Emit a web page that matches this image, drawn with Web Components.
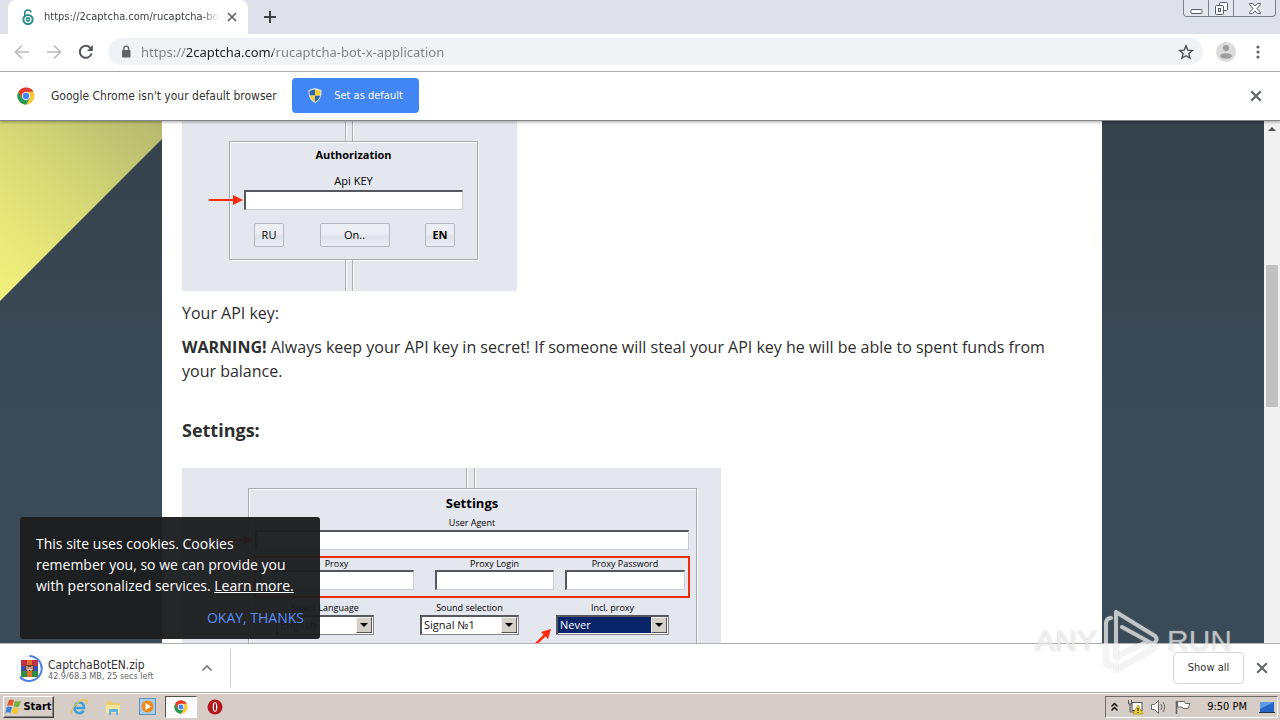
<!DOCTYPE html>
<html lang="en">
<head>
<meta charset="utf-8">
<meta name="viewport" content="width=device-width, initial-scale=1">
<title>2captcha – rucaptcha bot x application</title>
<style>
  html, body { margin: 0; height: 100%; }
  body { font: 12px/16px "DejaVu Sans Condensed", Tahoma, sans-serif; color: #333; overflow: hidden; }
</style>
</head>
<body>
<desktop-shell></desktop-shell>

<script>
const BASE = `<style>
  *, *::before { box-sizing: border-box; }
  button, input, select { font: inherit; color: inherit; margin: 0; border-radius: 0; }
  button { display: flex; align-items: center; justify-content: center; padding: 0; border: 0; background: none; }
  svg { display: block; flex: none; }
</style>`;

function define(name, html) {
  const template = document.createElement('template');
  template.innerHTML = BASE + html;
  customElements.define(name, class extends HTMLElement {
    constructor() {
      super();
      this.attachShadow({ mode: 'open' }).append(template.content.cloneNode(true));
    }
  });
}

const CHROME_LOGO = (size) => `<svg width="${size}" height="${size}" viewBox="0 0 48 48" aria-hidden="true">
  <circle cx="24" cy="24" r="23" fill="#fbc93b"/>
  <path d="M4.1 12.5A23 23 0 0 0 24 47L34 30 24 24 14 29z" fill="#229a55"/>
  <path d="M4.1 12.5A23 23 0 0 1 43.9 12.5H24L14 29z" fill="#e33b2e"/>
  <circle cx="24" cy="24" r="11" fill="#fff"/><circle cx="24" cy="24" r="8.5" fill="#4285f4"/></svg>`;

const CROSS = (size) => `<svg width="${size}" height="${size}" viewBox="0 0 10 10" aria-hidden="true"><path d="M1 1l8 8M9 1l-8 8" stroke="#5f6368" stroke-width="1.7" fill="none"/></svg>`;

/* ---------- Browser chrome ---------- */
define('browser-tab', `<style>
  :host { display: flex; align-items: center; align-self: stretch; width: 240px; padding: 0 11px 0 12px; gap: 8px;
    background: #fff; border-radius: 8px 8px 0 0; position: relative; color: #3c4043; font-size: 11px; }
  .title { flex: 1; min-width: 0; overflow: hidden; white-space: nowrap;
    -webkit-mask-image: linear-gradient(to right, #000 90%, transparent); mask-image: linear-gradient(to right, #000 90%, transparent); }
</style>
<svg width="16" height="16" viewBox="0 0 16 16" aria-hidden="true"><g fill="none" stroke="#2c8c8c">
  <circle cx="8" cy="10.5" r="4.6" stroke-width="2"/><circle cx="8" cy="10.5" r="1.6" stroke-width="1.6"/>
  <path d="M4.8 7V3.6C4.8.2 10.6.1 11 3.4" stroke-width="1.6"/></g></svg>
<span class="title"><slot></slot></span>
<button aria-label="Close tab">${CROSS(10)}</button>`);

define('tab-strip', `<style>
  :host { display: flex; height: 34px; padding-left: 8px; background: #dee1e9; align-items: center; }
  .new { width: 20px; height: 20px; margin-left: 12px; }
  .frame { margin: 0 4px 0 auto; align-self: flex-start; display: flex; height: 17px; border: 1px solid #7c828c; border-top: 0;
    border-radius: 0 0 4px 4px; background: #e3e6ec; }
  .frame button { width: 25px; border-right: 1px solid #7c828c; }
  .frame button:last-child { width: 41px; border: 0; }
</style>
<browser-tab>https://2captcha.com/rucaptcha-bot-x</browser-tab>
<button class="new" aria-label="New tab"><svg width="12" height="12" viewBox="0 0 12 12"><path d="M6 0v12M0 6h12" stroke="#3c4043" stroke-width="2"/></svg></button>
<div class="frame">
  <button aria-label="Minimize"><svg width="13" height="14" viewBox="0 0 13 14"><rect x="1" y="8.500" width="11" height="4" rx="1" fill="#fff" stroke="#555b66"/></svg></button>
  <button aria-label="Restore"><svg width="13" height="13" viewBox="0 0 13 13" fill="#fff" stroke="#555b66"><rect x="4.500" y=".5" width="8" height="8" rx="1"/><rect x=".5" y="3.500" width="8" height="9" rx="1"/><rect x="3.500" y="6.500" width="2" height="3"/></svg></button>
  <button aria-label="Close"><svg width="12" height="11" viewBox="0 0 12 11"><path d="M.5.500h3L6 3 8.500.500h3v1L8 5.500l3.500 4v1h-3L6 8l-2.500 2.500h-3v-1L4 5.500.5 1.500z" fill="#fff" stroke="#555b66"/></svg></button>
</div>`);

define('tool-bar', `<style>
  :host { display: flex; align-items: center; height: 38px; padding: 0 14px 2px; background: #fff; border-bottom: 1px solid #b4b4b4; box-sizing: border-box; }
  .nav { display: flex; gap: 16px; }
  .nav button { width: 16px; height: 16px; }
  .omni { flex: 1; display: flex; align-items: center; height: 27px; margin: 0 13px 0 14px; padding: 0 9px 0 13px; border-radius: 14px; background: #f0f3f6; }
  input { flex: 1; min-width: 0; border: 0; padding: 0; margin-left: 10px; outline: 0; font: 13px/20px "Noto Sans", sans-serif; height: 20px;
    background: linear-gradient(to right, #7b8086 45px, #202124 45px 132px, #7b8086 132px);
    -webkit-background-clip: text; background-clip: text; -webkit-text-fill-color: transparent; }
  .menu { width: 16px; height: 16px; margin-left: 14px; }
</style>
<div class="nav">
  <button aria-label="Back"><svg width="16" height="16" viewBox="0 0 16 16"><path d="M15 8H2M8 1.500 1.500 8 8 14.500" fill="none" stroke="#b9bbbe" stroke-width="1.700"/></svg></button>
  <button aria-label="Forward"><svg width="16" height="16" viewBox="0 0 16 16"><path d="M1 8h13M8 1.500 14.500 8 8 14.500" fill="none" stroke="#b9bbbe" stroke-width="1.700"/></svg></button>
  <button aria-label="Reload"><svg width="16" height="16" viewBox="0 0 16 16"><path d="M13.600 9.500A6 6 0 1 1 12.500 4" fill="none" stroke="#53565a" stroke-width="2"/><path d="M14.800 1v6H9z" fill="#53565a"/></svg></button>
</div>
<div class="omni">
  <svg width="10" height="13" viewBox="0 0 10 13" aria-hidden="true"><rect x="1" y="5" width="8.500" height="7.500" rx="1" fill="#5f6368"/><path d="M2.800 5.500V3.500a2.400 2.400 0 0 1 4.800 0v2" fill="none" stroke="#5f6368" stroke-width="1.400"/></svg>
  <input aria-label="Address and search bar" value="https://2captcha.com/rucaptcha-bot-x-application" spellcheck="false">
  <button aria-label="Bookmark this page"><svg width="16" height="16" viewBox="0 0 16 16"><path d="M8 1.800l1.800 4.300 4.600.4-3.500 3 1.100 4.600L8 11.700 4 14.100l1.100-4.600-3.500-3 4.600-.4z" fill="none" stroke="#4c5054" stroke-width="1.400"/></svg></button>
</div>
<button class="avatar" aria-label="Profile"><svg width="20" height="20" viewBox="0 0 20 20"><circle cx="10" cy="10" r="10" fill="#dcdcdc"/><circle cx="10" cy="6" r="3" fill="#9d9d9d"/><ellipse cx="10" cy="14" rx="6" ry="2.800" fill="#9d9d9d"/></svg></button>
<button class="menu" aria-label="Menu"><svg width="4" height="14" viewBox="0 0 4 14" fill="#5f6368"><circle cx="2" cy="2" r="1.600"/><circle cx="2" cy="7" r="1.600"/><circle cx="2" cy="12" r="1.600"/></svg></button>`);

define('default-prompt', `<style>
  :host { display: flex; align-items: center; height: 49px; padding: 0 18px 1px 17px; background: #fff; border-bottom: 1px solid #85868a;
    box-sizing: border-box; position: relative; z-index: 1; box-shadow: 0 1px 3px rgba(0,0,0,.35); color: #333; }
  p { margin: 0 auto 0 16px; }
  .lead { display: flex; align-items: center; width: 275px; }
  .set { height: 35px; width: 127px; gap: 12px; border-radius: 4px; background: #4285f4; color: #fff; font-size: 11px; }
  .close { margin-left: auto; }
</style>
<div class="lead">${CHROME_LOGO(18)}<p>Google Chrome isn't your default browser</p></div>
<button class="set"><svg width="14" height="15" viewBox="0 0 14 15" aria-hidden="true"><path d="M7 0l6.500 2c.3 7-2 10.500-6.500 13C2.500 12.500.2 9 .5 2z" fill="#dfe6ee"/><path d="M7 1.500v6H1.600V2.800zM7 7.500h5.200C11.500 10.500 9.700 12.500 7 13.800z" fill="#2b62b5"/><path d="M7 1.500v6h5.300V2.800zM7 7.500H1.700C2.400 10.500 4.300 12.500 7 13.800z" fill="#f6cf35"/></svg><span>Set as default</span></button>
<button class="close" aria-label="Dismiss">${CROSS(12)}</button>`);

/* ---------- Classic form parts inside the page's illustrations ---------- */
define('inset-field', `<style>
  :host { display: block; }
  label { display: flex; flex-direction: column; align-items: center; gap: var(--field-gap, 0px); }
  input { width: 100%; height: 20px; padding: 0 4px; background: #fff; outline: 0; border: 1px solid #c9ccd2; border-top: 2px solid #56585e; border-left: 2px solid #56585e; }
</style>
<label><slot></slot><input type="text"></label>`);

customElements.define('inset-select', class extends HTMLElement {
  constructor() {
    super();
    this.attachShadow({ mode: 'open' }).innerHTML = BASE + `<style>
      :host { display: block; }
      label { display: flex; flex-direction: column; align-items: center; gap: 1px; }
      .box { display: flex; width: 100%; height: 20px; padding: 1px; background: #fff; border: 1px solid #85878d;
        border-top-color: #56585e; border-left-color: #56585e; box-shadow: inset 1px 1px #56585e; }
      select { appearance: none; flex: 1; min-width: 0; border: 0; outline: 0; padding: 0 2px; font-size: 11px; line-height: 16px; background: transparent; color: #111; }
      :host([chosen]) select { background: #0a246a; color: #fff; }
      .drop { width: 16px; display: grid; place-items: center; background: #d4d0c8; border: 1px solid #f4f2ee; border-right-color: #55565a; border-bottom-color: #55565a; }
    </style>
    <label><span>${this.getAttribute('label')}</span><span class="box"><select><option>${this.getAttribute('value')}</option></select>
    <span class="drop"><svg width="8" height="4" viewBox="0 0 8 4"><path d="M0 0h8L4 4z" fill="#000"/></svg></span></span></label>`;
  }
});

define('auth-panel', `<style>
  :host { display: block; width: 335px; padding: 0 39px 0 47px; background: #e5e7ef; color: #000; font-size: 11px; line-height: 16px; box-sizing: border-box; }
  .stub { width: 8px; height: 20px; margin: 0 0 0 116px; border: 1px solid #a9acb4; border-width: 0 1px; box-shadow: inset 1px 0 #fff, 1px 0 #fff; }
  .stub.low { height: 31px; }
  .group { height: 119px; padding: 5px 14px 0; border: 1px solid #a5abb3; box-shadow: inset 1px 1px #fff, 1px 1px #fff; }
  h3 { margin: 0 0 10px; font: inherit; font-weight: bold; text-align: center; }
  .entry { position: relative; }
  .entry svg { position: absolute; right: 100%; bottom: 4px; margin-right: 1px; }
  .row { display: flex; justify-content: space-between; padding: 13px 8px 0 10px; }
  .row button { width: 30px; height: 24px; border: 1px solid #b4b8c0; border-radius: 2px; background: linear-gradient(#eceef4 40%, #dfe3e8 60%, #eceef4); }
  .row .on { width: 70px; }
</style>
<div class="stub"></div>
<div class="group">
  <h3>Authorization</h3>
  <div class="entry"><inset-field style="--field-gap:1px">Api KEY</inset-field>
  <svg width="34" height="12" viewBox="0 0 34 12" aria-hidden="true"><path d="M0 6h25" stroke="#fb2a0d" stroke-width="2"/><path d="M24 1l10 5-10 5z" fill="#fb2a0d"/></svg></div>
  <div class="row"><button>RU</button><button class="on">On..</button><button><b>EN</b></button></div>
</div>
<div class="stub low"></div>`);

define('settings-panel', `<style>
  :host { display: block; width: 539px; padding: 0 24px 0 66px; background: #e5e7ef; color: #000; font-size: 9px; line-height: 12px; box-sizing: border-box; }
  .stub { width: 9px; height: 20px; margin: 0 0 0 218px; border: 1px solid #a9acb4; border-width: 0 1px; box-shadow: inset 1px 0 #fff, 1px 0 #fff; }
  .group { height: 220px; padding: 6px 7px 0 6px; border: 1px solid #a5abb3; box-shadow: inset 1px 1px #fff, 1px 1px #fff; }
  h3 { margin: 0 0 6px; font-size: 13px; line-height: 16px; text-align: center; }
  .proxy { display: grid; grid-template-columns: 155px 1fr 120px; column-gap: 11px; margin: 6px -1px 0; padding: 0 3px 6px; border: 2px solid #e8300f; }
  .login { margin-left: 10px; }
  .picks { display: grid; grid-template-columns: 98px 108px 113px; column-gap: 37px; margin: 4px 0 0 21px; }
  .sound { margin-left: 9px; }
  .entry, .last { position: relative; }
  .entry svg { position: absolute; right: 100%; bottom: 4px; margin-right: 2px; }
  .last svg { position: absolute; right: 100%; top: 26px; margin-right: 4px; }
</style>
<div class="stub"></div>
<div class="group">
  <h3>Settings</h3>
  <div class="entry"><inset-field style="--field-gap:1px">User Agent</inset-field>
  <svg width="34" height="12" viewBox="0 0 34 12" aria-hidden="true"><path d="M0 6h25" stroke="#fb2a0d" stroke-width="2"/><path d="M24 1l10 5-10 5z" fill="#fb2a0d"/></svg></div>
  <div class="proxy"><inset-field>Proxy</inset-field><inset-field class="login">Proxy Login</inset-field><inset-field>Proxy Password</inset-field></div>
  <div class="picks">
    <inset-select label="Select Language" value="English"></inset-select>
    <inset-select class="sound" label="Sound selection" value="Signal №1"></inset-select>
    <div class="last"><inset-select chosen label="Incl. proxy" value="Never"></inset-select>
    <svg width="18" height="18" viewBox="0 0 18 18" aria-hidden="true"><path d="M1 17 12 6" stroke="#fb2a0d" stroke-width="2.500"/><path d="M17 1l-3 10-7-7z" fill="#fb2a0d"/></svg></div>
  </div>
</div>`);

/* ---------- Page ---------- */
define('cookie-notice', `<style>
  :host { display: block; width: 300px; padding: 16px 16px 11px; border-radius: 3px; background: rgba(28,29,30,.96); color: #fff;
    font: 14px/21px "Open Sans", sans-serif; box-sizing: border-box; }
  p { margin: 0 0 11px; }
  a { color: inherit; }
  button { margin-left: auto; color: #5a8df8; font: inherit; }
</style>
<p>This site uses cookies. Cookies remember you, so we can provide you with personalized services. <a href="#cookies">Learn more.</a></p>
<button>OKAY, THANKS</button>`);

define('page-view', `<style>
  :host { display: flex; flex: 1; min-height: 0; position: relative; overflow: hidden; background: linear-gradient(#36424c, #3a4b57 60%); }
  .corner { position: absolute; top: 0; left: 0; width: 180px; height: 180px; clip-path: polygon(0 0, 100% 0, 0 100%);
    background: linear-gradient(to top right, #f2f07c 0, #e6e679 25%, #d6d876 50%, #c2c672 75%, #b4b46c 100%); }
  .scroll { flex: 1; min-width: 0; overflow: hidden; }
  article { position: relative; max-width: 940px; min-height: 100%; margin: 0 auto; padding: 0 20px; box-sizing: border-box; background: #fff; color: #2e2e2e;
    font: 16px/24px "Open Sans", sans-serif; }
  p { margin: 10px 0; }
  h2 { margin: 35px 0 26px; font-size: 18px; line-height: 24px; font-weight: 700; }
  .bar { position: relative; width: 16px; background: #f1f1f1; padding: 6px 2px 0; }
  .bar i { display: block; height: 142px; margin-top: 134px; background: #c1c1c1; }
  .bar svg { margin: 0 auto; }
  cookie-notice { position: absolute; left: 20px; bottom: 4px; }
</style>
<div class="corner"></div>
<div class="scroll"><article>
  <auth-panel></auth-panel>
  <p>Your API key:</p>
  <p><b>WARNING!</b> Always keep your API key in secret! If someone will steal your API key he will be able to spent funds from your balance.</p>
  <h2>Settings:</h2>
  <settings-panel></settings-panel>
</article></div>
<div class="bar"><svg width="8" height="4" viewBox="0 0 8 4"><path d="M0 4h8L4 0z" fill="#505050"/></svg><i></i></div>
<cookie-notice></cookie-notice>`);

/* ---------- Downloads and taskbar ---------- */
define('download-shelf', `<style>
  :host { display: flex; align-items: center; height: 50px; padding: 0 12px 2px 16px; background: #fff; border-top: 1px solid #b0b0b0; color: #333; box-sizing: border-box; }
  .item { display: flex; align-items: center; align-self: stretch; width: 215px; margin: 5px 0 4px; border-right: 1px solid #d0d0d0; }
  .text { margin-left: 5px; padding-top: 4px; flex: 1; display: flex; flex-direction: column; }
  .name { font-size: 12px; line-height: 12px; }
  .state { font-size: 9px; line-height: 10px; color: #666; white-space: nowrap; }
  .item button { margin-right: 18px; }
  .all { width: 71px; height: 32px; margin-left: auto; border: 1px solid #d5d7da; border-radius: 4px; font-size: 11px; }
  .close { margin-left: 12px; }
</style>
<div class="item">
  <svg width="27" height="27" viewBox="0 0 27 27" aria-hidden="true"><circle cx="13.500" cy="13.500" r="12.500" fill="none" stroke="#d8e4fa" stroke-width="1"/><path d="M13.500 1A12.500 12.500 0 1 1 4 22" fill="none" stroke="#4a80ea" stroke-width="2"/>
    <rect x="5" y="5" width="17" height="6" fill="#c0304a"/><rect x="5" y="11" width="17" height="5" fill="#3552c0"/><rect x="5" y="16" width="17" height="6" fill="#2f8d44"/><rect x="11" y="5" width="5" height="17" fill="#e0702a"/><rect x="9" y="10" width="9" height="6" fill="#7a3a28"/><path d="M11 11v4h2v-3M16 11v4h-2v-3" fill="none" stroke="#eceae4"/></svg>
  <div class="text"><span class="name">CaptchaBotEN.zip</span><span class="state">42.9/68.3 MB, 25 secs left</span></div>
  <button aria-label="Download options"><svg width="10" height="6" viewBox="0 0 10 6"><path d="M.5 5.500 5 1l4.500 4.500" fill="none" stroke="#777" stroke-width="1.600"/></svg></button>
</div>
<button class="all">Show all</button>
<button class="close" aria-label="Close downloads">${CROSS(12)}</button>`);

define('task-bar', `<style>
  :host { display: flex; align-items: center; height: 27px; padding: 0 2px 0 3px; background: #d6cec6; box-shadow: inset 0 1px #fff, 0 -1px #b0aaa4; color: #000; box-sizing: border-box; }
  .start { width: 51px; height: 22px; gap: 1px; font-weight: bold; font-size: 11px; border: 1px solid #fff; border-right-color: #404040; border-bottom-color: #404040; box-shadow: inset -1px -1px #8b867f; }
  .quick { display: flex; align-items: center; gap: 2px; margin-left: 9px; }
  .quick button { width: 32px; height: 22px; }
  .quick .active { background: #fbfbfb; border: 1px solid #55524e; border-right-color: #fff; border-bottom-color: #fff; }
  .tray { display: flex; align-items: center; height: 22px; margin-left: auto; padding: 0 2px 0 4px; border: 1px solid #6f6b66; border-right-color: #fff; border-bottom-color: #fff; gap: 6px; }
  .tray .net { margin-left: 2px; }
  time { font-size: 11px; margin: 0 6px 0 10px; white-space: nowrap; }
</style>
<button class="start"><svg width="17" height="16" viewBox="0 0 17 16" aria-hidden="true"><path d="M4 1c2-1 3-.5 5 .300L7.400 7C5.500 6 4 6 2 7z" fill="#e2572c"/><path d="M10 1.700c2 1 3.500.8 6 0L14.200 7.500c-2 1-3.500.6-5.800-.2z" fill="#7cb242"/><path d="M1.800 8c2-1 3-.6 5.200.2L5.400 14C4 13 2.500 13 .3 14z" fill="#3f83d6"/><path d="M8 8.500c2 1 3.500.800 6 0L12.300 14.200c-2 1-3.600.7-5.900-.1z" fill="#f6c62f"/></svg>Start</button>
<div class="quick">
  <button aria-label="Internet Explorer"><svg width="18" height="18" viewBox="0 0 18 18"><path d="M4 10h10c.5-7-9-7.500-9.500 0 .2 6 7.500 6.500 9 2.500" fill="none" stroke="#3f9fdc" stroke-width="2.600"/><path d="M2 16C-1 12 9 1 16 2c2 .5 1 3 0 4" fill="none" stroke="#e8c63c" stroke-width="1.300"/></svg></button>
  <button aria-label="File Explorer"><svg width="18" height="18" viewBox="0 0 18 18"><path d="M2 3h6l1 2h7v10H2z" fill="#e9cf70"/><path d="M2 7h14v8H2z" fill="#f6e49b"/><path d="M5 17v-5q0-1 1-1h7q1 0 1 1v5h-2v-3H7v3z" fill="#5db4e0"/></svg></button>
  <button aria-label="Media Player"><svg width="17" height="17" viewBox="0 0 17 17"><rect x=".5" y=".5" width="16" height="16" fill="#a8cdea" stroke="#5b93bf"/><circle cx="8.500" cy="8.500" r="6" fill="#f08a1d"/><path d="M6.500 5l5.500 3.500L6.500 12z" fill="#fff"/></svg></button>
  <button class="active" aria-label="Google Chrome">${CHROME_LOGO(14)}</button>
  <button aria-label="Opera"><svg width="16" height="16" viewBox="0 0 16 16"><circle cx="8" cy="8" r="7.500" fill="#b3161b"/><ellipse cx="8" cy="8" rx="2.300" ry="4.800" fill="#fff"/><ellipse cx="8" cy="8" rx="1" ry="4" fill="#a01418"/></svg></button>
</div>
<div class="tray">
  <button aria-label="Show hidden icons"><svg width="9" height="10" viewBox="0 0 9 10"><path d="M1.500 4.500l3-3 3 3M1.500 8.500l3-3 3 3" fill="none" stroke="#000" stroke-width="1.400"/></svg></button>
  <button class="net" aria-label="Network"><svg width="17" height="16" viewBox="0 0 17 16"><rect x="5" y="3.500" width="10" height="8" fill="#f4f4f4" stroke="#555"/><path d="M1.500 1v4h3V1M3 5v8h5" fill="none" stroke="#555"/><path d="M11 6l5 9H6z" fill="#f6d51e" stroke="#a08608" stroke-width=".6"/><path d="M11 9v3M11 13v1" stroke="#222" stroke-width="1.300"/></svg></button>
  <button aria-label="Volume"><svg width="18" height="16" viewBox="0 0 18 16" fill="none" stroke="#666"><path d="M1.500 5.500h3l4-4v13l-4-4h-3z" fill="#fff"/><path d="M11 5q2 3 0 6M13 3q3.500 5 0 10"/></svg></button>
  <button aria-label="Action Center"><svg width="17" height="16" viewBox="0 0 17 16"><path d="M2.500 2v13" stroke="#666" stroke-width="1.600"/><path d="M3.500 2.500h7l1 2H16l-2 5H9l-1-1.500H3.500z" fill="#fff" stroke="#666"/></svg></button>
  <time>9:50 PM</time>
  <button aria-label="Show desktop"><svg width="16" height="14" viewBox="0 0 16 14"><path d="M1 2h14v10H1z" fill="#2364c4"/><path d="M1 2h14L1 9z" fill="#5d9ae6"/><path d="M0 12h16v1H0z" fill="#234"/></svg></button>
</div>`);

define('capture-mark', `<style>
  :host { display: flex; align-items: center; gap: 7px; font: 30px/60px "Liberation Sans Narrow", "Liberation Sans", sans-serif; color: rgba(255,255,255,.62);
    text-shadow: 0 0 2px rgba(150,150,150,.5); pointer-events: none; }
  svg { filter: drop-shadow(0 0 1px rgba(140,140,140,.5)); }
</style>
<span>ANY</span>
<svg width="56" height="64" viewBox="0 0 56 64" fill="none" stroke="#fff" stroke-opacity=".65" stroke-width="4" stroke-linejoin="round" stroke-linecap="round"><path d="M7 9Q2 9 2 15V53Q2 57 7 56"/><path d="M18 18 49 35Q55 31 51 27L12 3V48L42 33"/><path d="M12 56V61L52 38"/></svg>
<span>RUN</span>`);

define('desktop-shell', `<style>
  :host { display: flex; flex-direction: column; height: 100vh; position: relative; }
  capture-mark { position: absolute; right: 48px; bottom: 47px; }
</style>
<tab-strip></tab-strip>
<tool-bar></tool-bar>
<default-prompt></default-prompt>
<page-view></page-view>
<download-shelf></download-shelf>
<task-bar></task-bar>
<capture-mark></capture-mark>`);
</script>
</body>
</html>
